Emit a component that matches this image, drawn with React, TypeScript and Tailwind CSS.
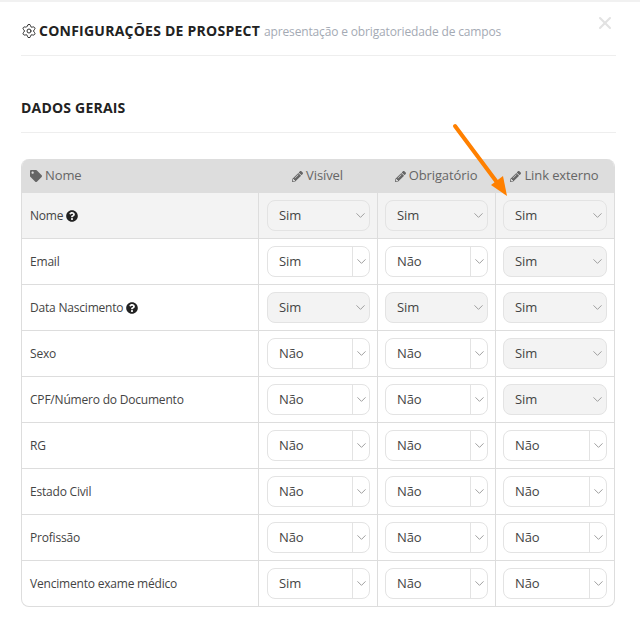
import { FaPencilAlt, FaQuestionCircle, FaTag } from "react-icons/fa"
import { ChevronDown, Settings, X } from "lucide-react"

type SelectProps = { value: string; locked?: boolean }

function FieldSelect({ value, locked }: SelectProps) {
  return (
    <div
      className={`flex h-[31px] w-full items-center rounded-[8px] border border-[#e3e3e3] ${
        locked ? "bg-[#f3f3f3]" : "bg-white"
      }`}
    >
      <span className="flex-1 pl-[11px] text-[13px] tracking-[-0.1px] text-[#444]">{value}</span>
      <span
        className={`flex h-full w-[17px] items-center justify-center ${locked ? "" : "border-l border-[#e3e3e3]"}`}
      >
        <ChevronDown className="h-[15px] w-[15px] text-[#999]" strokeWidth={1.5} />
      </span>
    </div>
  )
}

const rows = [
  { name: "Nome", help: true, visible: "Sim", required: "Sim", link: "Sim", lockV: true, lockR: true, lockL: true },
  { name: "Email", visible: "Sim", required: "Não", link: "Sim", lockL: true },
  { name: "Data Nascimento", help: true, visible: "Sim", required: "Sim", link: "Sim", lockV: true, lockR: true, lockL: true },
  { name: "Sexo", visible: "Não", required: "Não", link: "Sim", lockL: true },
  { name: "CPF/Número do Documento", visible: "Não", required: "Não", link: "Sim", lockL: true },
  { name: "RG", visible: "Não", required: "Não", link: "Não" },
  { name: "Estado Civil", visible: "Não", required: "Não", link: "Não" },
  { name: "Profissão", visible: "Não", required: "Não", link: "Não" },
  { name: "Vencimento exame médico", visible: "Sim", required: "Não", link: "Não" },
]

const columns = "grid grid-cols-[236px_119px_118px_119px]"

export default function App() {
  return (
    <div className="relative h-[639px] w-[640px] overflow-hidden bg-white font-['Open_Sans',sans-serif] text-[#444]">
      <div className="h-[2px] bg-[#f1f1f1]" />

      <div className="px-[21px] pt-[18px]">
        <div className="flex h-[36px] w-[595px] items-start border-b border-[#eeeeee]">
          <div className="flex items-center">
            <Settings className="mr-[2px] h-[16px] w-[16px] text-[#333]" strokeWidth={1.5} />
            <h1 className="text-[14px] font-bold leading-[20px] tracking-[0.24px] text-[#222]">
              CONFIGURAÇÕES DE PROSPECT
            </h1>
            <span className="ml-[4px] mt-[2px] text-[12px] leading-[20px] tracking-[-0.15px] text-[#a4aab4]">
              apresentação e obrigatoriedade de campos
            </span>
          </div>
        </div>

        <div className="mt-[42px] h-[35px] w-[595px] border-b border-[#eeeeee]">
          <h2 className="text-[14px] font-bold leading-[20px] tracking-[0.2px] text-[#222]">DADOS GERAIS</h2>
        </div>

        <div className="mt-[26px] w-[594px] overflow-hidden rounded-[8px] border border-t-0 border-[#dddddd]">
          <div className={`${columns} h-[34px] items-center bg-[#dddddd] text-[13px] tracking-[-0.1px] text-[#666]`}>
            <div className="flex items-center gap-[3px] pl-[8px]">
              <FaTag className="h-[12px] w-[12px] text-[#666]" />
              Nome
            </div>
            {["Visível", "Obrigatório", "Link externo"].map((label) => (
              <div key={label} className="flex items-center justify-center gap-[3px]">
                <FaPencilAlt className="h-[11px] w-[11px] text-[#666]" />
                {label}
              </div>
            ))}
          </div>

          {rows.map((row, index) => (
            <div
              key={row.name}
              className={`${columns} ${index > 0 ? "h-[46px] border-t border-[#dddddd]" : "h-[45px] bg-[#f3f3f3]"}`}
            >
              <div className="flex items-center gap-[3px] pl-[8px] text-[12px] tracking-[-0.2px] text-[#444]">
                {row.name}
                {row.help && <FaQuestionCircle className="h-[12px] w-[12px] text-[#222]" />}
              </div>
              <div className="flex items-center border-l border-[#dddddd] pl-[8px] pr-[7px]">
                <FieldSelect value={row.visible} locked={row.lockV} />
              </div>
              <div className="flex items-center border-l border-[#dddddd] pl-[7px] pr-[7px]">
                <FieldSelect value={row.required} locked={row.lockR} />
              </div>
              <div className="flex items-center border-l border-[#dddddd] pl-[7px] pr-[7px]">
                <FieldSelect value={row.link} locked={row.lockL} />
              </div>
            </div>
          ))}
        </div>
      </div>

      <X className="absolute left-[595px] top-[13px] h-[20px] w-[20px] text-[#e2e2e2]" strokeWidth={2.5} />

      <svg className="absolute left-[445px] top-[118px]" width="70" height="82" viewBox="0 0 70 82">
        <line x1="10" y1="8" x2="54" y2="67" stroke="#ff8000" strokeWidth="4" strokeLinecap="round" />
        <polygon points="62,78 46,67 58,58" fill="#ff8000" />
      </svg>
    </div>
  )
}
